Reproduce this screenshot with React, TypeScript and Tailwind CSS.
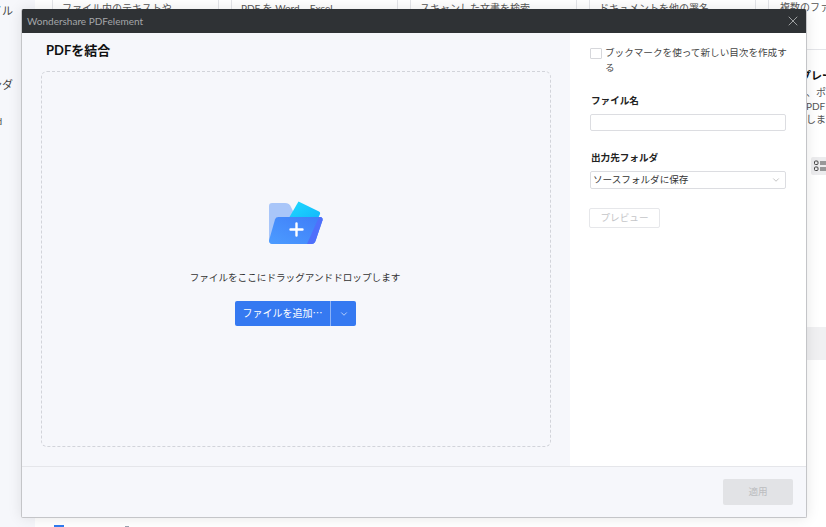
import { ChevronDown, X } from 'lucide-react';

const font = { fontFamily: 'Lato, "Noto Sans CJK JP", sans-serif' };

const cards = [
  { left: 'ファイル内のテキストや' },
  { left: 'PDF を Word、Excel' },
  { left: 'スキャンした文書を検索' },
  { left: 'ドキュメントを他の署名' },
];

const FolderIcon = () => (
  <svg width="54" height="44" viewBox="0 0 54 44" fill="none">
    <defs>
      <linearGradient id="cyan" x1="0" y1="0" x2="1" y2="1">
        <stop offset="0" stopColor="#1fdcff" />
        <stop offset="1" stopColor="#12b4fb" />
      </linearGradient>
      <linearGradient id="front" x1="0" y1="1" x2="1" y2="0">
        <stop offset="0" stopColor="#4c9cff" />
        <stop offset="1" stopColor="#3f7cf8" />
      </linearGradient>
    </defs>
    <path d="M3 2h13c3 0 5 1.500 6 4l3 6v31H4c-2.500 0-4-1.500-4-4V5c0-2 1-3 3-3z" fill="#a9c6f9" />
    <path d="M29.500 0.500 50 10.500c1 .5 1.300 1.500 1 2.500L47 22H17z" fill="url(#cyan)" />
    <path d="M9.500 16H51c2 0 3 1.400 2.500 3.200L46.500 40c-.7 2-2 3-4 3H3c-2 0-3-1.500-3-3.500L6 18.500c.6-1.700 1.800-2.500 3.500-2.500z" fill="url(#front)" />
    <path d="M50 16h1c2 0 3 1.400 2.500 3.200L46.500 40c-.7 2-2 3-4 3H38z" fill="#4f6ffb" />
    <path d="M27.500 22.500v12M21.500 28.500h12" stroke="#fff" strokeWidth="2.400" strokeLinecap="round" />
  </svg>
);

const ListIcon = () => (
  <svg width="12" height="12" viewBox="0 0 12 12" fill="none" stroke="#444" strokeWidth="1">
    <rect x="0.500" y="1" width="3.500" height="3.500" rx="1" />
    <rect x="0.500" y="7" width="3.500" height="3.500" rx="1" />
    <path d="M6 2h6M6 4h6M6 8h6M6 10h6" />
  </svg>
);

const Backdrop = () => (
  <div className="flex h-full">
    <div className="w-[35px] shrink-0 overflow-hidden bg-[#f6f7fb] text-[11px] text-[#444]">
      <div className="-ml-[9px] mt-[3px] h-[74px] whitespace-nowrap">イル</div>
      <div className="-ml-[9px] h-[38px] whitespace-nowrap">ンダ</div>
      <div className="-ml-[3px] text-[9px] leading-[14px]">d</div>
    </div>
    <div className="relative flex-1 bg-white">
      <div className="ml-[17px] flex gap-[12px]">
        {cards.map((c) => (
          <div key={c.left} className="h-[50px] w-[167px] border-x border-b border-[#e4e5e9] pl-[9px] pt-[1px] text-[10px] text-[#555]">
            {c.left}
          </div>
        ))}
        <div className="h-[50px] w-[70px] shrink-0 border-b border-l border-[#e4e5e9] pl-[11px] text-[10px] leading-[15px] text-[#555]">
          <div className="whitespace-nowrap">複数のファ</div>
          <div>結合</div>
        </div>
      </div>
      <div className="absolute left-[765px] top-[68px] w-[40px] text-[11px] font-bold leading-[15px] text-[#111] whitespace-nowrap">プレー</div>
      <div className="absolute left-[771px] top-[86px] w-[40px] text-[10px] leading-[13.500px] text-[#555]">
        <div className="whitespace-nowrap">、ポ</div>
        <div>PDF</div>
        <div>しま</div>
      </div>
      <div className="absolute left-[776px] top-[157px] flex h-[18px] w-[16px] items-center rounded-[2px] bg-[#ececee] pl-[3px]">
        <ListIcon />
      </div>
      <div className="absolute left-[771px] top-[327px] h-[33px] w-[20px] bg-[#f0f0f2]" />
      <div className="absolute left-[19px] top-[525px] h-[2px] w-[10px] bg-[#2f7bf0]" />
      <div className="absolute left-[90px] top-[526px] h-[1px] w-[4px] bg-[#9aa4b0]" />
    </div>
  </div>
);

export default function App() {
  return (
    <div className="relative h-[527px] w-[826px] overflow-hidden bg-white" style={font}>
      <Backdrop />

      <div className="absolute left-[21px] top-[9px] flex h-[509px] w-[786px] flex-col overflow-hidden rounded-[2px] border border-t-0 border-[#c4c5c8] bg-white shadow-[0_0_14px_rgba(0,0,0,0.1)]">
        <div className="flex h-[24px] shrink-0 items-center justify-between bg-[#2f3235] pl-[5px] pr-[5px] text-[10px] text-[#a4a6a9]">
          <span>Wondershare PDFelement</span>
          <X className="h-[16px] w-[16px] text-[#d8d9da]" strokeWidth={1} />
        </div>

        <div className="flex min-h-0 flex-1">
          <div className="flex w-[548px] shrink-0 flex-col bg-[#f6f7fb] pb-[19px] pl-[19px] pr-[19px]">
            <h1 className="ml-[5px] mt-[8px] text-[13px] font-bold leading-[18px] text-[#111]">PDFを結合</h1>
            <div className="mt-[12px] flex flex-1 flex-col items-center rounded-[6px] border border-dashed border-[#d2d4da] pt-[129px]">
              <FolderIcon />
              <p className="-ml-[2px] mt-[26px] text-[9.600px] leading-[14px] text-[#333]">ファイルをここにドラッグアンドドロップします</p>
              <div className="-ml-[1px] mt-[16px] flex h-[25px] w-[121px] rounded-[2px] bg-[#3579f1] text-white">
                <span className="flex w-[96px] items-center justify-center border-r border-[#8db3f6] text-[10px]">ファイルを追加⋯</span>
                <span className="flex flex-1 items-center justify-center">
                  <ChevronDown className="h-[10px] w-[10px]" strokeWidth={1.500} />
                </span>
              </div>
            </div>
          </div>

          <div className="flex-1 pl-[20px] pr-[20px] pt-[13px] text-[9.600px] text-[#333]">
            <label className="-mr-[6px] flex gap-[3px] leading-[14.500px]">
              <span className="mt-[2px] h-[11px] w-[12px] shrink-0 rounded-[1px] border border-[#d6d7db] bg-white" />
              <span className="text-[#444]">ブックマークを使って新しい目次を作成する</span>
            </label>
            <div className="ml-[1px] mt-[19px] font-bold leading-[14px] text-[#222]">ファイル名</div>
            <div className="mt-[6px] h-[17px] rounded-[2px] border border-[#dcdde1] bg-white" />
            <div className="ml-[1px] mt-[20px] font-bold leading-[14px] text-[#222]">出力先フォルダ</div>
            <div className="mt-[6px] flex h-[18px] items-center justify-between rounded-[2px] border border-[#dcdde1] bg-white pl-[2px] pr-[4px]">
              <span className="text-[#333]">ソースフォルダに保存</span>
              <ChevronDown className="h-[10px] w-[10px] text-[#888]" strokeWidth={1.200} />
            </div>
            <div className="-ml-[1px] mt-[19px] flex h-[20px] w-[71px] items-center justify-center rounded-[2px] border border-[#e6e7ea] text-[#c4c5c8]">プレビュー</div>
          </div>
        </div>

        <div className="flex h-[51px] shrink-0 items-center justify-end border-t border-[#e5e6ea] bg-[#f6f7fb] pr-[13px]">
          <div className="flex h-[26px] w-[70px] items-center justify-center rounded-[2px] bg-[#e2e3e6] text-[9.600px] text-[#bcbdc0]">適用</div>
        </div>
      </div>
    </div>
  );
}
